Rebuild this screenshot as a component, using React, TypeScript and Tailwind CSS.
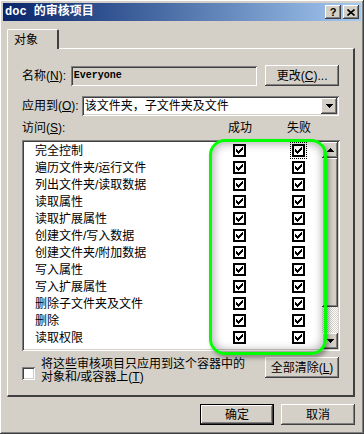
import React from 'react';

const raised =
  'shadow-[inset_-1px_-1px_#404040,inset_1px_1px_#ffffff,inset_-2px_-2px_#808080,inset_2px_2px_#d4d0c8]';
const sunken =
  'shadow-[inset_1px_1px_#808080,inset_-1px_-1px_#ffffff,inset_2px_2px_#404040,inset_-2px_-2px_#d4d0c8]';

const items = [
  '完全控制',
  '遍历文件夹/运行文件',
  '列出文件夹/读取数据',
  '读取属性',
  '读取扩展属性',
  '创建文件/写入数据',
  '创建文件夹/附加数据',
  '写入属性',
  '写入扩展属性',
  '删除子文件夹及文件',
  '删除',
  '读取权限',
];

// classic 7x7 check bitmap, one 3px-tall column per x
const checkCols = [2, 3, 4, 3, 2, 1, 0];

const Check = ({ focus = false }: { focus?: boolean }) => (
  <div
    className={`w-[13px] h-[13px] border-2 border-black bg-white flex items-center justify-center ${
      focus ? 'outline-1 outline-dotted outline-black outline-offset-1' : ''
    }`}
  >
    <svg width="7" height="7" viewBox="0 0 7 7" shapeRendering="crispEdges">
      {checkCols.map((y, x) => (
        <rect key={x} x={x} y={y} width="1" height="3" fill="#000" />
      ))}
    </svg>
  </div>
);

const Btn = ({ children, className = '' }: { children: React.ReactNode; className?: string }) => (
  <div className={`bg-[#d4d0c8] ${raised} flex items-center justify-center ${className}`}>{children}</div>
);

const Arrow = ({ down = false }: { down?: boolean }) => (
  <svg width="7" height="4" viewBox="0 0 7 4" shapeRendering="crispEdges">
    {down ? <polygon points="0,0 7,0 3.5,4" fill="#000" /> : <polygon points="0,4 7,4 3.5,0" fill="#000" />}
  </svg>
);

export default function App() {
  return (
    <div
      className={`relative w-[364px] h-[434px] bg-[#d4d0c8] p-[3px] flex flex-col text-black text-[12px] leading-[14px] font-['Liberation_Sans','Noto_Sans_CJK_SC',sans-serif] ${raised}`}
    >
      {/* title bar */}
      <div className="h-[18px] flex items-center bg-linear-to-r from-[#0a246a] to-[#a6caf0] pl-[2px] pr-[2px]">
        <span className="text-white font-bold text-[12px] font-['Liberation_Mono','Noto_Sans_CJK_SC',monospace]">
          doc 的审核项目
        </span>
        <div className="ml-auto flex gap-[2px]">
          <Btn className="w-[16px] h-[14px]">
            <span className="font-bold text-[11px] leading-none font-['Liberation_Sans',sans-serif]">?</span>
          </Btn>
          <Btn className="w-[16px] h-[14px]">
            <svg width="8" height="7" viewBox="0 0 8 7">
              <path d="M0.5 0.5 L7.5 6.5 M7.5 0.5 L0.5 6.5" stroke="#000" strokeWidth="1.6" />
            </svg>
          </Btn>
        </div>
      </div>

      {/* tab strip */}
      <div className="mt-[8px] ml-[4px] flex">
        <div className="relative z-10 -mb-px w-[52px] h-[20px] bg-[#d4d0c8] rounded-t-[2px] border-l border-t border-white border-r-2 border-r-[#404040] pl-[6px] pt-[3px]">
          对象
        </div>
      </div>

      {/* tab panel */}
      <div className="ml-[4px] w-[348px] h-[349px] border-l border-t border-white border-r-2 border-b-2 border-r-[#404040] border-b-[#404040] px-[14px] pt-[16px] flex flex-col">
        <div className="flex items-center h-[21px]">
          <span className="w-[49px]">
            名称(<u>N</u>):
          </span>
          <div
            className={`w-[187px] h-[20px] ${sunken} flex items-center pl-[3px] font-bold text-[10px] font-['Liberation_Mono',monospace]`}
          >
            Everyone
          </div>
          <Btn className="ml-[8px] w-[74px] h-[21px]">
            更改(<u>C</u>)...
          </Btn>
        </div>

        <div className="mt-[10px] flex items-center h-[20px]">
          <span className="w-[60px]">
            应用到(<u>O</u>):
          </span>
          <div className={`w-[258px] h-[20px] bg-white ${sunken} flex items-center pl-[3px] pr-[2px]`}>
            <span className="flex-1">该文件夹，子文件夹及文件</span>
            <Btn className="w-[16px] h-[16px]">
              <Arrow down />
            </Btn>
          </div>
        </div>

        <div className="mt-[5px] flex items-center h-[14px]">
          <span className="w-[206px]">
            访问(<u>S</u>):
          </span>
          <span className="w-[24px]">成功</span>
          <span className="ml-[35px]">失败</span>
        </div>

        <div className={`mt-[5px] w-[318px] h-[211px] bg-white ${sunken} p-[2px] flex`}>
          <div className="flex-1 flex flex-col">
            {items.map((t, i) => (
              <div key={t} className="h-[17px] flex items-center">
                <span className="w-[209px] pl-[11px] whitespace-nowrap">{t}</span>
                <Check />
                <div className="ml-[46px]">
                  <Check focus={i === 0} />
                </div>
              </div>
            ))}
          </div>
          <div className="w-[16px] flex flex-col">
            <Btn className="w-[16px] h-[16px]">
              <Arrow />
            </Btn>
            <Btn className="w-[16px] h-[149px]" >
              {null}
            </Btn>
            <div className="flex-1 bg-[repeating-conic-gradient(#d4d0c8_0_25%,#ffffff_0_50%)] bg-[length:2px_2px]" />
            <Btn className="w-[16px] h-[16px]">
              <Arrow down />
            </Btn>
          </div>
        </div>

        <div className="mt-[6px] flex">
          <div className={`mt-[10px] w-[13px] h-[13px] bg-white ${sunken}`} />
          <div className="ml-[6px] mt-[1px] leading-[13px]">
            <div>将这些审核项目只应用到这个容器中的</div>
            <div>
              对象和/或容器上(<u>T</u>)
            </div>
          </div>
          <Btn className="ml-auto w-[74px] h-[21px]">
            全部清除(<u>L</u>)
          </Btn>
        </div>
      </div>

      {/* dialog buttons */}
      <div className="mt-[7px] ml-[4px] w-[348px] flex justify-end gap-[7px]">
        <div className="w-[74px] h-[21px] border border-black">
          <Btn className="w-full h-full">确定</Btn>
        </div>
        <Btn className="w-[74px] h-[21px]">取消</Btn>
      </div>

      {/* green annotation around the check columns */}
      <div className="pointer-events-none absolute left-[209px] top-[139px] w-[118px] h-[216px] rounded-[16px] border-[3px] border-[#00ff00] shadow-[inset_0_0_9px_2px_rgba(0,0,0,0.3),2px_3px_4px_rgba(0,0,0,0.35)]" />
    </div>
  );
}
